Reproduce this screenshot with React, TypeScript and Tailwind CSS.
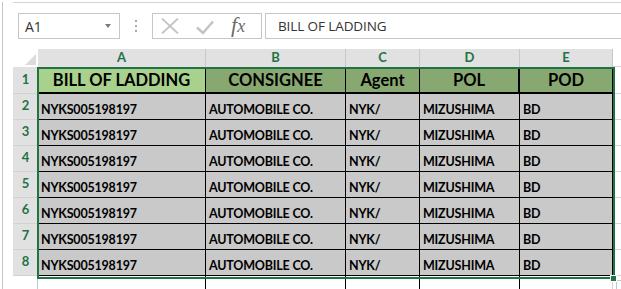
import React from "react";

const GREEN = "#217346";

const colWidths = ["w-[168px]", "w-[140px]", "w-[74px]", "w-[100px]", "w-[93px]"];
const headers = ["BILL OF LADDING", "CONSIGNEE", "Agent", "POL", "POD"];
const row = ["NYKS005198197", "AUTOMOBILE CO.", "NYK/", "MIZUSHIMA", "BD"];
const letters = ["A", "B", "C", "D", "E"];

export default function App() {
  const cellFont = { fontFamily: "Lato, 'Open Sans', sans-serif" };
  return (
    <div className="w-[621px] h-[289px] bg-white overflow-hidden pl-[2px]">
      <div className="relative h-full border-l border-[#c6c6c6]" style={cellFont}>
        {/* top line */}
        <div className="mt-[2px] ml-[10px] border-t border-[#d4d4d4]" />
        {/* formula bar */}
        <div className="mt-[10px] flex items-stretch h-[26px]">
          <div
            className="ml-[15px] w-[102px] border border-[#c6c6c6] flex items-center justify-between pl-[6px] pr-[8px]"
            style={{ fontFamily: "'Open Sans', sans-serif" }}
          >
            <span className="text-[14px] text-[#333]">A1</span>
            <span className="w-0 h-0 border-l-[3px] border-r-[3px] border-t-[4px] border-l-transparent border-r-transparent border-t-[#7a7a7a]" />
          </div>
          <div className="w-[32px] flex flex-col items-center justify-center gap-[3px]">
            <span className="w-[2px] h-[2px] bg-[#a8a8a8]" />
            <span className="w-[2px] h-[2px] bg-[#a8a8a8]" />
            <span className="w-[2px] h-[2px] bg-[#a8a8a8]" />
          </div>
          <div className="w-[110px] border border-[#c6c6c6] flex items-center pl-[8px]">
            <svg width="18" height="16" viewBox="0 0 18 16">
              <path d="M1 0.5 L17 15.5 M17 0.5 L1 15.5" stroke="#c4c4c4" strokeWidth="1.8" fill="none" />
            </svg>
            <svg width="18" height="15" viewBox="0 0 18 15" className="ml-[17px] mt-[2px]">
              <path d="M1 7.5 L7 13 L17 1.5" stroke="#c4c4c4" strokeWidth="2.6" fill="none" />
            </svg>
            <span
              className="ml-[17px] text-[22px] italic text-[#6a6a6a] leading-none -mt-[3px]"
              style={{ fontFamily: "'Liberation Serif', 'DejaVu Serif', serif" }}
            >
              f<span className="text-[18px]">x</span>
            </span>
          </div>
          <div
            className="ml-[3px] flex-1 border-y border-l border-[#c6c6c6] flex items-center pl-[12px]"
            style={{ fontFamily: "'Open Sans', sans-serif" }}
          >
            <span className="text-[13.5px] text-[#333] tracking-[-0.1px]">BILL OF LADDING</span>
          </div>
        </div>

        {/* grid */}
        <div className="mt-[10px] pl-[10px]">
          {/* column header */}
          <div className="flex h-[18px]">
            <div className="w-[25px] flex items-end justify-end pr-[2px] pb-[2px]">
              <svg width="11" height="11" viewBox="0 0 11 11">
                <path d="M11 0 L11 11 L0 11 Z" fill="#dcdcdc" />
              </svg>
            </div>
            {letters.map((l, i) => (
              <div
                key={l}
                className={`${colWidths[i]} bg-[#e1e1e1] border-r border-[#c8c8c8] flex items-center justify-center text-[13px] font-bold`}
                style={{ color: GREEN }}
              >
                {l}
              </div>
            ))}
            <div className="flex-1 border-b border-[#d4d4d4]" />
          </div>

          {/* rows */}
          {Array.from({ length: 8 }).map((_, r) => {
            const isHead = r === 0;
            return (
              <div key={r} className={`flex ${isHead ? "h-[27px]" : "h-[26px]"}`}>
                <div
                  className="w-[25px] bg-[#e1e1e1] border-b border-[#d2d2d2] flex items-end justify-center pb-[4px] text-[13px] font-bold"
                  style={{ color: GREEN }}
                >
                  {r + 1}
                </div>
                {letters.map((_, c) => {
                  let bg = "bg-[#c9c9c9]";
                  if (isHead) bg = c === 0 ? "bg-[#a9d18e]" : "bg-[#88a872]";
                  const rb = isHead && c === 3 ? "border-r-2" : "border-r";
                  const bb = isHead ? "border-b-2" : "border-b";
                  return (
                    <div
                      key={c}
                      className={`${colWidths[c]} ${bg} ${rb} ${bb} border-black flex ${
                        isHead
                          ? "items-center justify-center text-[16.5px] pt-[2px]"
                          : "items-end pl-[3px] pb-[3px] text-[12.5px] tracking-[-0.2px]"
                      } font-bold text-black leading-none whitespace-nowrap overflow-hidden`}
                    >
                      {isHead ? headers[c] : row[c]}
                    </div>
                  );
                })}
                <div className="flex-1 border-b border-[#d4d4d4]" />
              </div>
            );
          })}

          {/* row 9 partial */}
          <div className="flex h-[20px]">
            <div className="w-[25px] border-r border-[#c8c8c8]" />
            <div className="w-[168px] border-r border-black" />
            <div className="w-[140px] border-r border-black" />
            <div className="w-[74px] border-r border-black" />
            <div className="w-[100px] border-r border-black" />
            <div className="w-[93px] border-r border-[#d4d4d4]" />
            <div className="flex-1 relative">
              <div className="absolute left-[3px] top-[4px] w-[10px] h-[14px] border border-[#c6c6c6]" />
            </div>
          </div>
        </div>

        {/* selection overlay */}
        <div
          className="absolute left-[34px] top-[65px] w-[578px] h-[212px] border-2 pointer-events-none"
          style={{ borderColor: GREEN }}
        />
        <div
          className="absolute left-[607px] top-[273px] w-[7px] h-[7px] border border-white"
          style={{ backgroundColor: GREEN }}
        />
      </div>
    </div>
  );
}
